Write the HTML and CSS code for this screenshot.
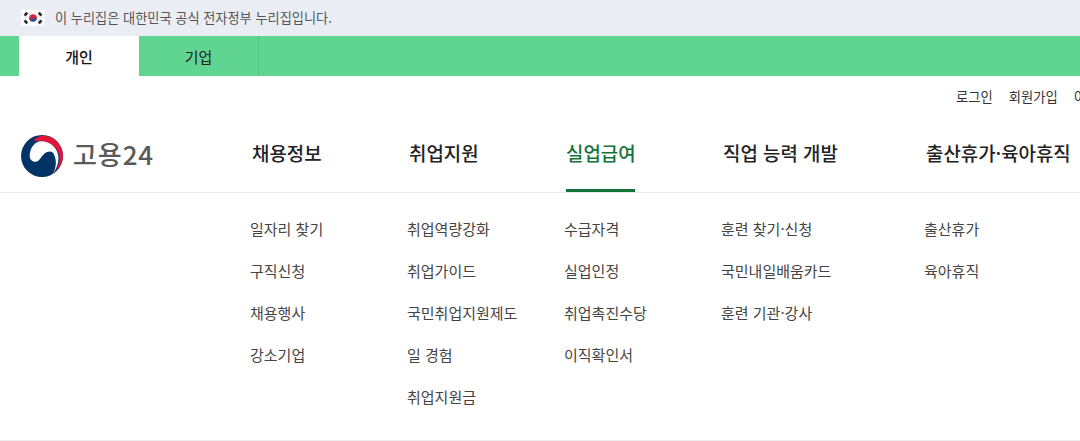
FILE: index.html
```html
<!DOCTYPE html>
<html lang="ko">
<head>
<meta charset="utf-8">
<title>고용24</title>
<link rel="stylesheet" href="styles.css">
</head>
<body>
<div class="page">
  <div class="gov-bar">
    <svg class="flag" viewBox="0 0 24 16" width="24" height="16" aria-hidden="true">
      <rect width="24" height="16" fill="#fbfbfb"/>
      <path d="M8.2 8a3.8 3.8 0 0 1 7.6 0z" fill="#d5263c"/>
      <path d="M8.2 8a3.8 3.8 0 0 0 7.6 0z" fill="#1f4e9e"/>
      <path d="M8.2 8a1.9 1.9 0 0 0 3.8 0a1.9 1.9 0 0 1 3.8 0v0.6h-7.6z" fill="#d5263c"/>
      <g stroke="#2a2a2a" stroke-width="2.6" stroke-linecap="butt">
        <path d="M3.6 5.6l2.6-3"/><path d="M17.8 2.6l2.6 3"/><path d="M3.6 10.4l2.6 3"/><path d="M17.8 13.4l2.6-3"/>
      </g>
    </svg>
    <span class="gov-text">이 누리집은 대한민국 공식 전자정부 누리집입니다.</span>
  </div>
  <div class="tabs">
    <a class="tab tab-on">개인</a>
    <a class="tab">기업</a>
  </div>
  <div class="util">
    <a>로그인</a>
    <a>회원가입</a>
    <a>이용안내</a>
  </div>
  <div class="head">
    <div class="logo">
      <svg class="mark" viewBox="0 0 44 44" width="44" height="44" aria-hidden="true">
        <circle cx="22" cy="22" r="21" fill="#003366"/>
        <path d="M9.700 21.500C9.700 14 15 7 22 7 31 7 38.500 15 38.500 24.500c0 5.500-2.500 10.500-5.500 15 2.500-5 3.500-9.500 2.500-14.500-0.900-4.500-2.500-7.500-5.500-7.500-4.500 0-6.800 3-9.300 6.500-1.400 2-3.200 3.800-5.500 3.800-3.300 0-5.500-2.700-5.500-5.800z" fill="#ffffff"/>
        <path d="M13.500 6.500C16 3.500 19.500 1.800 23 1.500 34 1.500 43 10.500 43 22c0 7-4 13-10 17.500 4.500-4.500 6.500-9.500 6.500-14.500C39.500 15 31 7.200 21.500 7.200c-3 0-5.500-0.200-8-0.700z" fill="#e0173c"/>
      </svg>
      <span class="logo-text">고용24</span>
    </div>
    <nav class="gnb">
      <a class="gnb-item w1">채용정보</a>
      <a class="gnb-item w2">취업지원</a>
      <a class="gnb-item w3 on">실업급여</a>
      <a class="gnb-item w4">직업 능력 개발</a>
      <a class="gnb-item w5">출산휴가·육아휴직</a>
    </nav>
  </div>
  <div class="mega">
    <ul class="col c1">
      <li>일자리 찾기</li><li>구직신청</li><li>채용행사</li><li>강소기업</li>
    </ul>
    <ul class="col c2">
      <li>취업역량강화</li><li>취업가이드</li><li>국민취업지원제도</li><li>일 경험</li><li>취업지원금</li>
    </ul>
    <ul class="col c3">
      <li>수급자격</li><li>실업인정</li><li>취업촉진수당</li><li>이직확인서</li>
    </ul>
    <ul class="col c4">
      <li>훈련 찾기·신청</li><li>국민내일배움카드</li><li>훈련 기관·강사</li>
    </ul>
    <ul class="col c5">
      <li>출산휴가</li><li>육아휴직</li>
    </ul>
  </div>
</div>
</body>
</html>
```
FILE: styles.css
```css
* { box-sizing: border-box; }
html, body { margin: 0; padding: 0; background: #fff; }
body { font-family: "Noto Sans CJK KR", "Noto Sans", sans-serif; overflow: hidden; }
.page { width: 1080px; height: 441px; overflow: hidden; }
.gov-bar {
  height: 36px; background: #eaedf3; display: flex; align-items: center;
  padding-left: 21px; gap: 10px;
}
.flag { flex: none; }
.gov-text { font-size: 13.2px; color: #555; line-height: 20px; }
.tabs { height: 40px; background: #60d592; display: flex; padding-left: 19px; }
.tab {
  width: 120px; display: flex; align-items: center; justify-content: center;
  font-size: 15px; color: #222; border-right: 1px solid #52c283;
}
.tab-on { background: #fff; font-weight: 500; color: #111; border-right: 0; }
.util {
  height: 40px; display: flex; gap: 16px; padding-left: 956px; white-space: nowrap;
  align-items: center; font-size: 13.3px; color: #333;
}
.util a { flex: none; }
.head {
  height: 77px; display: flex; align-items: flex-start; border-bottom: 1px solid #ececec;
  padding-left: 20px;
}
.logo { width: 232px; height: 76px; display: flex; align-items: flex-start; gap: 9px; padding-top: 18px; flex: none; }
.mark { display: block; flex: none; }
.logo-text { font-size: 26px; line-height: 40px; color: #5a5a5a; font-weight: 500; letter-spacing: 0.9px; }
.gnb { display: flex; height: 76px; white-space: nowrap; }
.gnb-item {
  display: block; height: 76px; flex: none; font-size: 18.9px; font-weight: 500; color: #222;
  line-height: 74px;
}
.w1, .w2, .w3 { width: 157px; }
.w4 { width: 203px; }
.w5 { width: 160px; }
.on { color: #13743a; position: relative; }
.on::after {
  content: ""; position: absolute; left: 0; top: 73px; width: 69px; height: 3px; background: #13743a;
}
.mega {
  height: 248px; border-bottom: 1px solid #ececec; display: flex; padding: 15px 0 0 250px;
}
.col { list-style: none; margin: 0; padding: 0; flex: none; }
.col li { height: 42px; line-height: 42px; font-size: 15px; color: #444; white-space: nowrap; }
.c1, .c2, .c3 { width: 157px; }
.c4 { width: 203px; }
.c5 { width: 150px; }
```
